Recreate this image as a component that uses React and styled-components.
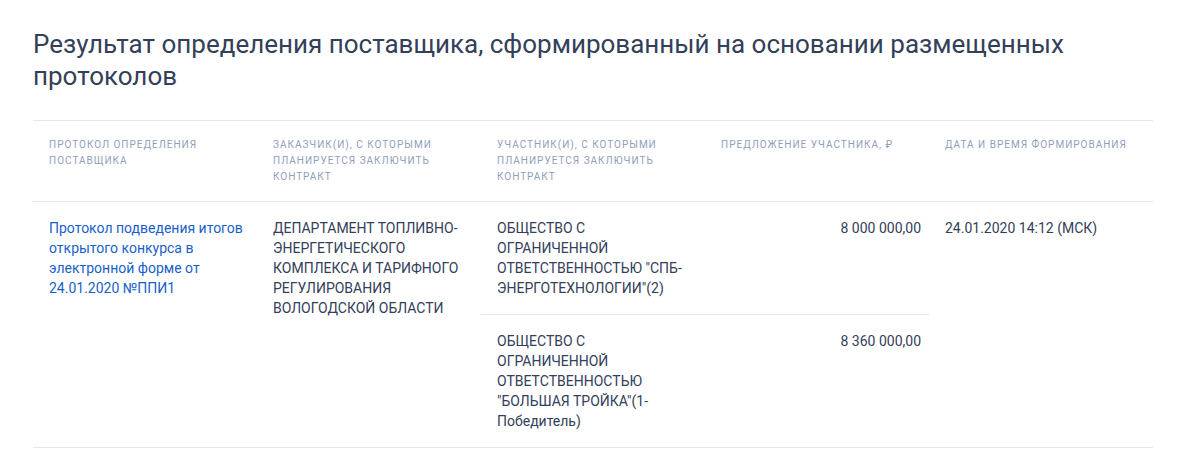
import React from 'react'
import styled, { createGlobalStyle } from 'styled-components'

const GlobalStyle = createGlobalStyle`
  body {
    margin: 0;
    background: #fff;
    font-family: Roboto, "Liberation Sans", sans-serif;
    color: #334059;
  }
`

const Page = styled.div`
  padding: 28px 41px 0 33px;
`

const Title = styled.h2`
  margin: 0 0 28px;
  font-size: 26px;
  line-height: 32px;
  font-weight: 400;
  color: #334059;
`

const Table = styled.div`
  width: 1120px;
  border-top: 1px solid #e4e7f2;
`

const Row = styled.div`
  display: flex;
  border-bottom: 1px solid #e4e7f2;
`

const HeadCell = styled.div`
  width: 224px;
  box-sizing: border-box;
  padding: 16px;
  font-size: 10px;
  line-height: 16px;
  letter-spacing: 1px;
  text-transform: uppercase;
  color: #909ebb;
`

const Cell = styled.div`
  width: 224px;
  box-sizing: border-box;
  padding: 16px;
  padding-right: ${p => (p.$tight ? '8px' : '16px')};
  font-size: 14px;
  line-height: 20px;
  color: #334059;
  text-align: ${p => (p.$right ? 'right' : 'left')};
`

const Link = styled.a`
  color: #1a5fc9;
  text-decoration: none;
`

const Offers = styled.div`
  display: flex;
  flex-direction: column;
  width: 448px;
`

const Offer = styled.div`
  display: flex;
  & + & {
    border-top: 1px solid #e4e7f2;
  }
`

const offers = [
  {
    name: 'ОБЩЕСТВО С ОГРАНИЧЕННОЙ ОТВЕТСТВЕННОСТЬЮ "СПБ-ЭНЕРГОТЕХНОЛОГИИ"(2)',
    price: '8 000 000,00',
  },
  {
    name: 'ОБЩЕСТВО С ОГРАНИЧЕННОЙ ОТВЕТСТВЕННОСТЬЮ "БОЛЬШАЯ ТРОЙКА"(1-Победитель)',
    price: '8 360 000,00',
  },
]

export default function App() {
  return (
    <Page>
      <GlobalStyle />
      <Title>
        Результат определения поставщика, сформированный на основании размещенных протоколов
      </Title>
      <Table>
        <Row>
          <HeadCell>Протокол определения поставщика</HeadCell>
          <HeadCell>Заказчик(и), с которыми планируется заключить контракт</HeadCell>
          <HeadCell>Участник(и), с которыми планируется заключить контракт</HeadCell>
          <HeadCell>Предложение участника, ₽</HeadCell>
          <HeadCell>Дата и время формирования</HeadCell>
        </Row>
        <Row>
          <Cell $tight>
            <Link href="#">
              Протокол подведения итогов открытого конкурса в электронной форме от 24.01.2020 №ППИ1
            </Link>
          </Cell>
          <Cell>ДЕПАРТАМЕНТ ТОПЛИВНО-ЭНЕРГЕТИЧЕСКОГО КОМПЛЕКСА И ТАРИФНОГО РЕГУЛИРОВАНИЯ ВОЛОГОДСКОЙ ОБЛАСТИ</Cell>
          <Offers>
            {offers.map(o => (
              <Offer key={o.price}>
                <Cell>{o.name}</Cell>
                <Cell $right $tight>{o.price}</Cell>
              </Offer>
            ))}
          </Offers>
          <Cell>24.01.2020 14:12 (МСК)</Cell>
        </Row>
      </Table>
    </Page>
  )
}
